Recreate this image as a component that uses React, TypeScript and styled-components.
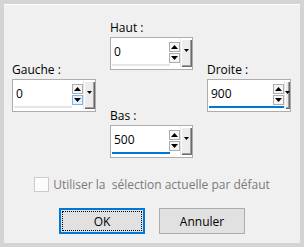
import styled, { createGlobalStyle } from "styled-components";

const GlobalStyle = createGlobalStyle`
  html, body {
    margin: 0;
    padding: 0;
    background: #d4d4d4;
  }
  body {
    font-family: "Open Sans", "Liberation Sans", sans-serif;
    font-size: 12px;
    color: #000;
  }
`;

type BoxProps = {
  label: string;
  value: string;
  lineColor: string;
  lineWidth: number;
  hoverDown?: boolean;
  width?: number;
};

function SpinBox({ label, value, lineColor, lineWidth, hoverDown, width }: BoxProps) {
  return (
    <Group>
      <Label>{label}</Label>
      <Box $width={width ?? 84}>
        <Main>
          <FieldRow>
            <Value>{value}</Value>
            <SpinColumn>
              <SpinButton>
                <svg width="7" height="4" viewBox="0 0 7 4">
                  <path d="M0 4 L3.5 0 L7 4 Z" fill="#000" />
                </svg>
              </SpinButton>
              <SpinButton $hover={hoverDown}>
                <svg width="7" height="4" viewBox="0 0 7 4">
                  <path d="M0 0 L3.5 4 L7 0 Z" fill="#000" />
                </svg>
              </SpinButton>
            </SpinColumn>
          </FieldRow>
          <Underline $color={lineColor} $width={lineWidth} />
        </Main>
        <DropButton>
          <svg width="5" height="3" viewBox="0 0 5 3">
            <path d="M0 0 L2.5 3 L5 0 Z" fill="#000" />
          </svg>
        </DropButton>
      </Box>
    </Group>
  );
}

export default function App() {
  return (
    <>
      <GlobalStyle />
      <Dialog>
        <Fields>
          <Column $top={58}>
            <SpinBox label="Gauche :" value="0" lineColor="#e6e6e6" lineWidth={58} hoverDown />
          </Column>
          <Column $top={16} $gap={38}>
            <SpinBox label="Haut :" value="0" lineColor="#e6e6e6" lineWidth={58} width={83} />
            <SpinBox label="Bas :" value="500" lineColor="#0078d7" lineWidth={58} width={83} />
          </Column>
          <Column $top={58}>
            <SpinBox label="Droite :" value="900" lineColor="#0078d7" lineWidth={75} />
          </Column>
        </Fields>
        <CheckRow>
          <CheckBox />
          <CheckText>Utiliser la  sélection actuelle par défaut</CheckText>
        </CheckRow>
        <ButtonRow>
          <DialogButton $default>OK</DialogButton>
          <DialogButton>Annuler</DialogButton>
        </ButtonRow>
      </Dialog>
    </>
  );
}

const Dialog = styled.div`
  box-sizing: border-box;
  width: 304px;
  height: 247px;
  border: 4px solid #d4d4d4;
  background: #f0f0f0;
  box-shadow: inset 0 1px 0 #ffffff;
  display: flex;
  flex-direction: column;
  align-items: center;
`;

const Fields = styled.div`
  display: flex;
  gap: 14px;
  align-self: flex-start;
  margin-left: 8px;
`;

const Column = styled.div<{ $top: number; $gap?: number }>`
  display: flex;
  flex-direction: column;
  padding-top: ${(p) => p.$top}px;
  gap: ${(p) => p.$gap ?? 0}px;
`;

const Group = styled.div`
  display: flex;
  flex-direction: column;
`;

const Label = styled.label`
  line-height: 15px;
  margin-bottom: 2px;
  white-space: nowrap;
`;

const Box = styled.div<{ $width: number }>`
  box-sizing: border-box;
  width: ${(p) => p.$width}px;
  height: 33px;
  border: 1px solid #adadad;
  background: #fff;
  display: flex;
`;

const Main = styled.div`
  flex: 1;
  display: flex;
  flex-direction: column;
`;

const FieldRow = styled.div`
  flex: 1;
  display: flex;
`;

const Value = styled.div`
  flex: 1;
  padding: 6px 0 0 3px;
  line-height: 16px;
`;

const SpinColumn = styled.div`
  display: flex;
  flex-direction: column;
  gap: 1px;
  padding-top: 4px;
`;

const SpinButton = styled.div<{ $hover?: boolean }>`
  box-sizing: border-box;
  width: 11px;
  height: 10px;
  border: 1px solid ${(p) => (p.$hover ? "#7eb4ea" : "#adadad")};
  background: ${(p) => (p.$hover ? "#e5f1fb" : "#f5f5f5")};
  display: flex;
  align-items: center;
  justify-content: center;
`;

const Underline = styled.div<{ $color: string; $width: number }>`
  width: ${(p) => p.$width}px;
  height: 2px;
  margin: 0 0 3px 1px;
  background: ${(p) => p.$color};
`;

const DropButton = styled.div`
  box-sizing: border-box;
  width: 12px;
  margin: 1px 0 2px 0;
  background: #ececec;
  border-left: 1px solid #e3e3e3;
  box-shadow: inset 1px 1px 0 #ffffff, inset -1px -1px 0 #696969,
    inset -2px -2px 0 #a0a0a0;
  display: flex;
  align-items: center;
  justify-content: center;
  padding-bottom: 6px;
`;

const CheckRow = styled.div`
  display: flex;
  align-items: center;
  gap: 4px;
  margin-top: 19px;
  height: 15px;
`;

const CheckBox = styled.span`
  box-sizing: border-box;
  width: 15px;
  height: 15px;
  border: 1px solid #cccccc;
  background: #fcfcfc;
`;

const CheckText = styled.span`
  color: #7a7a7a;
  line-height: 16px;
  white-space: pre;
`;

const ButtonRow = styled.div`
  display: flex;
  gap: 14px;
  margin-top: 16px;
`;

const DialogButton = styled.button<{ $default?: boolean }>`
  box-sizing: border-box;
  width: 86px;
  height: 26px;
  padding: 0;
  font-family: inherit;
  font-size: 12px;
  color: #000;
  background: #e1e1e1;
  border: ${(p) => (p.$default ? "2px solid #0078d7" : "1px solid #adadad")};
  outline: ${(p) => (p.$default ? "1px dotted #000" : "none")};
  outline-offset: -4px;
`;
